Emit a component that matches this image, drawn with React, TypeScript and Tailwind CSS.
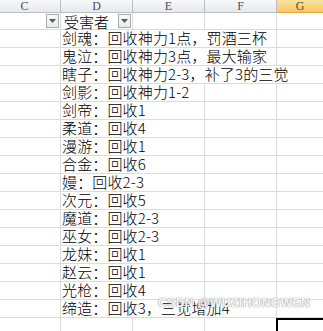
import React from 'react';

type Row = { text: string; span: 2 | 3 | 4 };

const rows: Row[] = [
  { text: '剑魂：回收神力1点，罚酒三杯', span: 3 },
  { text: '鬼泣：回收神力3点，最大输家', span: 3 },
  { text: '瞎子：回收神力2-3，补了3的三觉', span: 4 },
  { text: '剑影：回收神力1-2', span: 2 },
  { text: '剑帝：回收1', span: 2 },
  { text: '柔道：回收4', span: 2 },
  { text: '漫游：回收1', span: 2 },
  { text: '合金：回收6', span: 2 },
  { text: '嫚：回收2-3', span: 2 },
  { text: '次元：回收5', span: 2 },
  { text: '魔道：回收2-3', span: 2 },
  { text: '巫女：回收2-3', span: 2 },
  { text: '龙妹：回收1', span: 2 },
  { text: '赵云：回收1', span: 2 },
  { text: '光枪：回收4', span: 2 },
  { text: '缔造：回收3，三觉增加4', span: 3 },
];

// full class names so tailwind picks them up
const spanClass: Record<number, string> = {
  2: 'col-span-2',
  3: 'col-span-3',
  4: 'col-span-4',
};
const blankCount: Record<number, number> = { 2: 2, 3: 1, 4: 0 };

const cell = 'h-[18px] border-r border-b border-[#dadcdd]';
const lastCell = 'h-[18px] border-b border-[#dadcdd]';
const cjk = { fontFamily: '"Noto Sans CJK SC", "Noto Sans", sans-serif' };

const FilterButton: React.FC = () => (
  <div className="w-[13px] h-[14px] border border-[#a7abb0] bg-gradient-to-b from-[#fbfbfb] to-[#e9ebee] flex items-center justify-center">
    <svg width="7" height="4" viewBox="0 0 7 4">
      <path d="M0 0 L7 0 L3.5 4 Z" fill="#5a5a5a" />
    </svg>
  </div>
);

const Header: React.FC<{ label: string; active?: boolean }> = ({ label, active }) => (
  <div
    className={
      active
        ? 'h-[13px] border-b border-[#f0a93c] bg-gradient-to-b from-[#fbe3a3] to-[#f4c660] flex items-center justify-center text-[#5b4a22]'
        : 'h-[13px] border-r border-b border-[#b9bfc7] bg-gradient-to-b from-[#f7f8fa] to-[#e6e9ed] flex items-center justify-center text-[#4d4d4d]'
    }
    style={{ fontFamily: '"Liberation Serif", serif' }}
  >
    <span className="text-[12px] leading-[12px]">{label}</span>
  </div>
);

export default function App() {
  return (
    <div className="relative w-[323px] h-[331px] overflow-hidden bg-white">
      <div className="ml-[-11px] w-[334px] grid grid-cols-[72px_72px_72px_72px_1fr]">
        <Header label="C" />
        <Header label="D" />
        <Header label="E" />
        <Header label="F" />
        <Header label="G" active />

        <div className="h-[17px] border-r border-b border-[#dadcdd] flex items-center justify-end pr-[1px]">
          <FilterButton />
        </div>
        <div className="h-[17px] border-r border-b border-[#dadcdd] flex items-center justify-between pl-[3px] pr-[1px]">
          <span className="text-[15px] leading-[17px] font-light text-black whitespace-nowrap" style={cjk}>
            受害者
          </span>
          <FilterButton />
        </div>
        <div className="h-[17px] border-r border-b border-[#dadcdd]" />
        <div className="h-[17px] border-r border-b border-[#dadcdd]" />
        <div className="h-[17px] border-b border-[#dadcdd]" />

        {rows.map((r, i) => (
          <React.Fragment key={i}>
            <div className={cell} />
            <div className={`${spanClass[r.span]} ${r.span === 4 ? lastCell : cell} relative`}>
              <span
                className="absolute left-[1px] bottom-[0px] text-[15px] leading-[18px] font-light tracking-[0.15px] text-black whitespace-nowrap"
                style={cjk}
              >
                {r.text}
              </span>
            </div>
            {Array.from({ length: blankCount[r.span] }).map((_, j) => (
              <div key={j} className={j === blankCount[r.span] - 1 ? lastCell : cell} />
            ))}
          </React.Fragment>
        ))}

        <div className={cell} />
        <div className={cell} />
        <div className={cell} />
        <div className={cell} />
        <div className="h-[18px] relative">
          <div className="absolute left-[-1px] top-[0px] right-[-2px] bottom-[-4px] border-l-2 border-t-2 border-black" />
        </div>
      </div>

      <div
        className="absolute left-[158px] top-[297px] text-[12px] leading-[12px] font-bold tracking-[0.5px] text-white/90 whitespace-nowrap"
        style={{
          fontFamily: '"Liberation Sans", Arial, sans-serif',
          textShadow: '0 0 1px #a8a8a8, 0 0 1px #a8a8a8, 0 0 1px #a8a8a8',
        }}
      >
        CSDN @WUZIHONGWEN
      </div>
    </div>
  );
}
